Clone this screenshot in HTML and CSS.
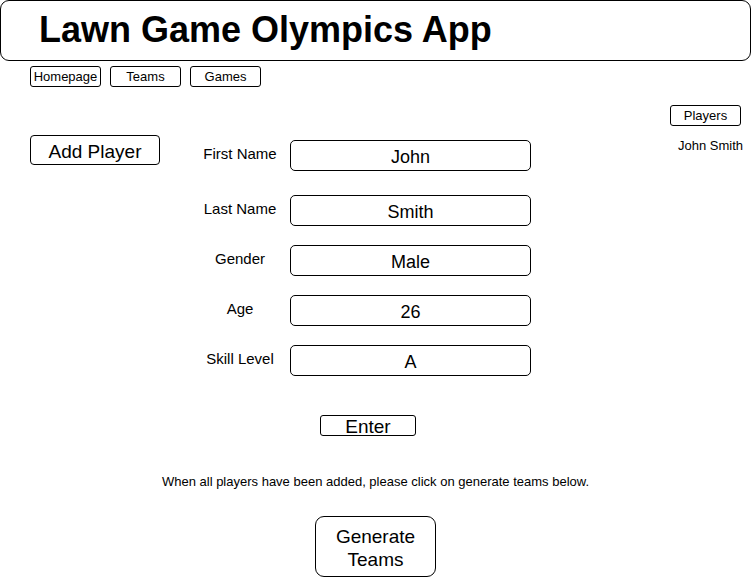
FILE: index.html
```html
<!DOCTYPE html>
<html lang="en">
<head>
<meta charset="utf-8">
<title>Lawn Game Olympics App</title>
<link rel="stylesheet" href="styles.css">
</head>
<body>
<header class="title-bar">
  <h1 class="title">Lawn Game Olympics App</h1>
</header>
<nav class="nav">
  <button class="nav-btn">Homepage</button>
  <button class="nav-btn">Teams</button>
  <button class="nav-btn">Games</button>
</nav>
<main class="workspace">
  <section class="editor">
    <button class="add-btn">Add Player</button>
    <form class="form">
      <div class="row row-first">
        <label class="label">First Name</label>
        <div class="field">John</div>
      </div>
      <div class="row">
        <label class="label">Last Name</label>
        <div class="field">Smith</div>
      </div>
      <div class="row">
        <label class="label">Gender</label>
        <div class="field">Male</div>
      </div>
      <div class="row">
        <label class="label">Age</label>
        <div class="field">26</div>
      </div>
      <div class="row">
        <label class="label">Skill Level</label>
        <div class="field">A</div>
      </div>
    </form>
  </section>
  <aside class="players">
    <button class="players-btn">Players</button>
    <div class="player-name">John Smith</div>
  </aside>
</main>
<div class="enter-wrap">
  <button class="enter-btn">Enter</button>
</div>
<p class="message">When all players have been added, please click on generate teams below.</p>
<div class="generate-wrap">
  <button class="generate-btn">Generate<br>Teams</button>
</div>
</body>
</html>
```
FILE: styles.css
```css
* { box-sizing: border-box; }
html, body { margin: 0; padding: 0; }
body {
  font-family: "Liberation Sans", Arial, sans-serif;
  color: #000;
  background: #fff;
  width: 751px;
  height: 577px;
  overflow: hidden;
}
button {
  font-family: "Liberation Sans", Arial, sans-serif;
  color: #000;
  background: #fff;
  border: 1px solid #000;
  padding: 0;
  cursor: pointer;
}
.title-bar {
  width: 751px;
  height: 61px;
  border: 1px solid #000;
  border-radius: 9px;
  padding-left: 38px;
  display: flex;
  align-items: center;
}
.title {
  margin: 0;
  font-size: 36px;
  font-weight: bold;
  line-height: 40px;
  margin-top: -1px;
}
.nav {
  display: flex;
  gap: 9px;
  padding-left: 30px;
  margin-top: 5px;
}
.nav-btn {
  width: 71px;
  height: 21px;
  font-size: 13px;
  border-radius: 3px;
  line-height: 19px;
}
.workspace {
  display: flex;
  padding: 0 10px 0 30px;
  margin-top: 18px;
}
.editor {
  display: flex;
  gap: 30px;
  padding-top: 30px;
}
.add-btn {
  width: 130px;
  height: 30px;
  font-size: 19px;
  border-radius: 4px;
  line-height: 27px;
  padding-top: 2px;
}
.form {
  display: flex;
  flex-direction: column;
  gap: 19px;
  padding-top: 5px;
  margin: 0;
}
.row {
  display: flex;
  align-items: center;
}
.row-first { margin-bottom: 5px; }
.label {
  width: 100px;
  text-align: center;
  font-size: 15px;
  line-height: 17px;
  margin-top: -5px;
}
.field {
  width: 241px;
  height: 31px;
  border: 1px solid #000;
  border-radius: 5px;
  text-align: center;
  font-size: 18px;
  line-height: 28px;
  padding-top: 2px;
}
.players {
  margin-left: auto;
  display: flex;
  flex-direction: column;
  align-items: flex-end;
}
.players-btn {
  width: 71px;
  height: 21px;
  font-size: 13px;
  border-radius: 3px;
  line-height: 19px;
}
.player-name {
  font-size: 13px;
  line-height: 15px;
  margin-top: 12px;
  margin-right: -2px;
}
.enter-wrap {
  display: flex;
  padding-left: 320px;
  margin-top: 39px;
}
.enter-btn {
  width: 96px;
  height: 21px;
  font-size: 19px;
  line-height: 19px;
  border-radius: 3px;
  padding-top: 1px;
}
.message {
  margin: 38px 0 0;
  text-align: center;
  font-size: 13px;
  line-height: 15px;
}
.generate-wrap {
  display: flex;
  justify-content: center;
  margin-top: 27px;
}
.generate-btn {
  width: 121px;
  height: 61px;
  font-size: 19px;
  line-height: 23px;
  border-radius: 9px;
  padding-top: 2px;
}
```
